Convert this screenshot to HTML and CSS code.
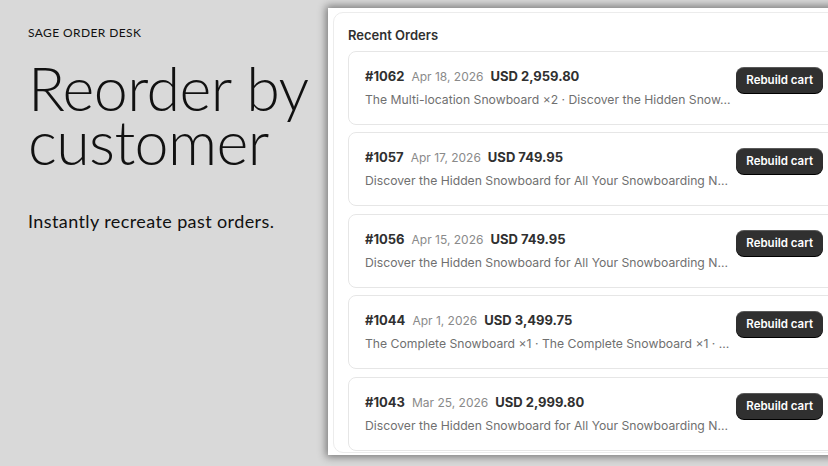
FILE: index.html
```html
<!DOCTYPE html>
<html lang="en">
<head>
    <meta charset="UTF-8">
    <title>Sage Order Desk</title>
    <link rel="stylesheet" href="styles.css">
</head>
<body>

    <!-- Left intro column -->
    <section class="intro">
        <p class="brand">SAGE ORDER DESK</p>
        <h1>Reorder by customer</h1>
        <p class="tagline">Instantly recreate past orders.</p>
    </section>

    <!-- App screenshot panel -->
    <section class="panel">
        <div class="orders-card">
            <h2>Recent Orders</h2>

            <div class="order">
                <div class="order-info">
                    <div class="order-line">
                        <span class="order-no">#1062</span>
                        <span class="order-date">Apr 18, 2026</span>
                        <span class="order-total">USD 2,959.80</span>
                    </div>
                    <div class="order-items">The Multi-location Snowboard ×2 · Discover the Hidden Snow…</div>
                </div>
                <button class="rebuild">Rebuild cart</button>
            </div>

            <div class="order">
                <div class="order-info">
                    <div class="order-line">
                        <span class="order-no">#1057</span>
                        <span class="order-date">Apr 17, 2026</span>
                        <span class="order-total">USD 749.95</span>
                    </div>
                    <div class="order-items">Discover the Hidden Snowboard for All Your Snowboarding N…</div>
                </div>
                <button class="rebuild">Rebuild cart</button>
            </div>

            <div class="order">
                <div class="order-info">
                    <div class="order-line">
                        <span class="order-no">#1056</span>
                        <span class="order-date">Apr 15, 2026</span>
                        <span class="order-total">USD 749.95</span>
                    </div>
                    <div class="order-items">Discover the Hidden Snowboard for All Your Snowboarding N…</div>
                </div>
                <button class="rebuild">Rebuild cart</button>
            </div>

            <div class="order">
                <div class="order-info">
                    <div class="order-line">
                        <span class="order-no">#1044</span>
                        <span class="order-date">Apr 1, 2026</span>
                        <span class="order-total">USD 3,499.75</span>
                    </div>
                    <div class="order-items">The Complete Snowboard ×1 · The Complete Snowboard ×1 · …</div>
                </div>
                <button class="rebuild">Rebuild cart</button>
            </div>

            <div class="order">
                <div class="order-info">
                    <div class="order-line">
                        <span class="order-no">#1043</span>
                        <span class="order-date">Mar 25, 2026</span>
                        <span class="order-total">USD 2,999.80</span>
                    </div>
                    <div class="order-items">Discover the Hidden Snowboard for All Your Snowboarding N…</div>
                </div>
                <button class="rebuild">Rebuild cart</button>
            </div>
        </div>
    </section>

</body>
</html>
```

FILE: styles.css
```css
body {
    margin: 0;
    width: 828px;
    height: 466px;
    overflow: hidden;
    background-color: #d9d9d9;
    display: flex;
    align-items: flex-start;
}
.intro {
    width: 300px;
    padding: 26px 0 0 28px;
    flex-shrink: 0;
    font-family: "Lato", "Liberation Sans", sans-serif;
    color: #111;
}
.brand {
    margin: 0;
    font-size: 12px;
    line-height: 14px;
    letter-spacing: 0.4px;
}
.intro h1 {
    margin: 21px 0 0;
    font-size: 61px;
    font-weight: 300;
    line-height: 54px;
    letter-spacing: -0.6px;
}
.tagline {
    margin: 41px 0 0;
    font-size: 18px;
    line-height: 22px;
    letter-spacing: 0.4px;
}
.panel {
    margin-top: 8px;
    width: 520px;
    height: 441px;
    flex-shrink: 0;
    background: #fff;
    padding: 4px 0 2px 5px;
    box-shadow: 0 0 8px 2px rgba(0, 0, 0, 0.45);
    font-family: "Inter", "Liberation Sans", sans-serif;
}
.orders-card {
    height: 100%;
    box-sizing: border-box;
    border: 1px solid #ececec;
    border-radius: 10px;
    padding: 14px 14px 0 14px;
    display: flex;
    flex-direction: column;
    gap: 7.6px;
    overflow: hidden;
}
.orders-card h2 {
    margin: 0;
    font-size: 13px;
    font-weight: 600;
    line-height: 16px;
    color: #303030;
}
.order {
    width: 492px;
    height: 74px;
    box-sizing: border-box;
    border: 1px solid #e6e6e6;
    border-radius: 8px;
    padding: 14px 16px;
    display: flex;
    align-items: flex-start;
    gap: 8px;
    flex-shrink: 0;
}
.order-info {
    flex: 1;
    min-width: 0;
    display: flex;
    flex-direction: column;
    gap: 4px;
}
.order-line {
    display: flex;
    align-items: baseline;
    gap: 7px;
    height: 20px;
    line-height: 20px;
}
.order-no {
    font-size: 13px;
    font-weight: 700;
    color: #303030;
}
.order-date {
    font-size: 12px;
    color: #8a8a8a;
}
.order-total {
    font-size: 13px;
    font-weight: 700;
    color: #303030;
}
.order-items {
    font-size: 12.2px;
    line-height: 20px;
    color: #707070;
    white-space: nowrap;
}
.rebuild {
    flex-shrink: 0;
    margin-top: 1px;
    height: 26px;
    padding: 0 10px;
    border: none;
    border-radius: 8px;
    background: #303030;
    box-shadow: 0 1px 0 #000, inset 0 1px 0 rgba(255, 255, 255, 0.2);
    color: #fff;
    font-family: "Inter", "Liberation Sans", sans-serif;
    font-size: 11.5px;
    font-weight: 600;
}
```
